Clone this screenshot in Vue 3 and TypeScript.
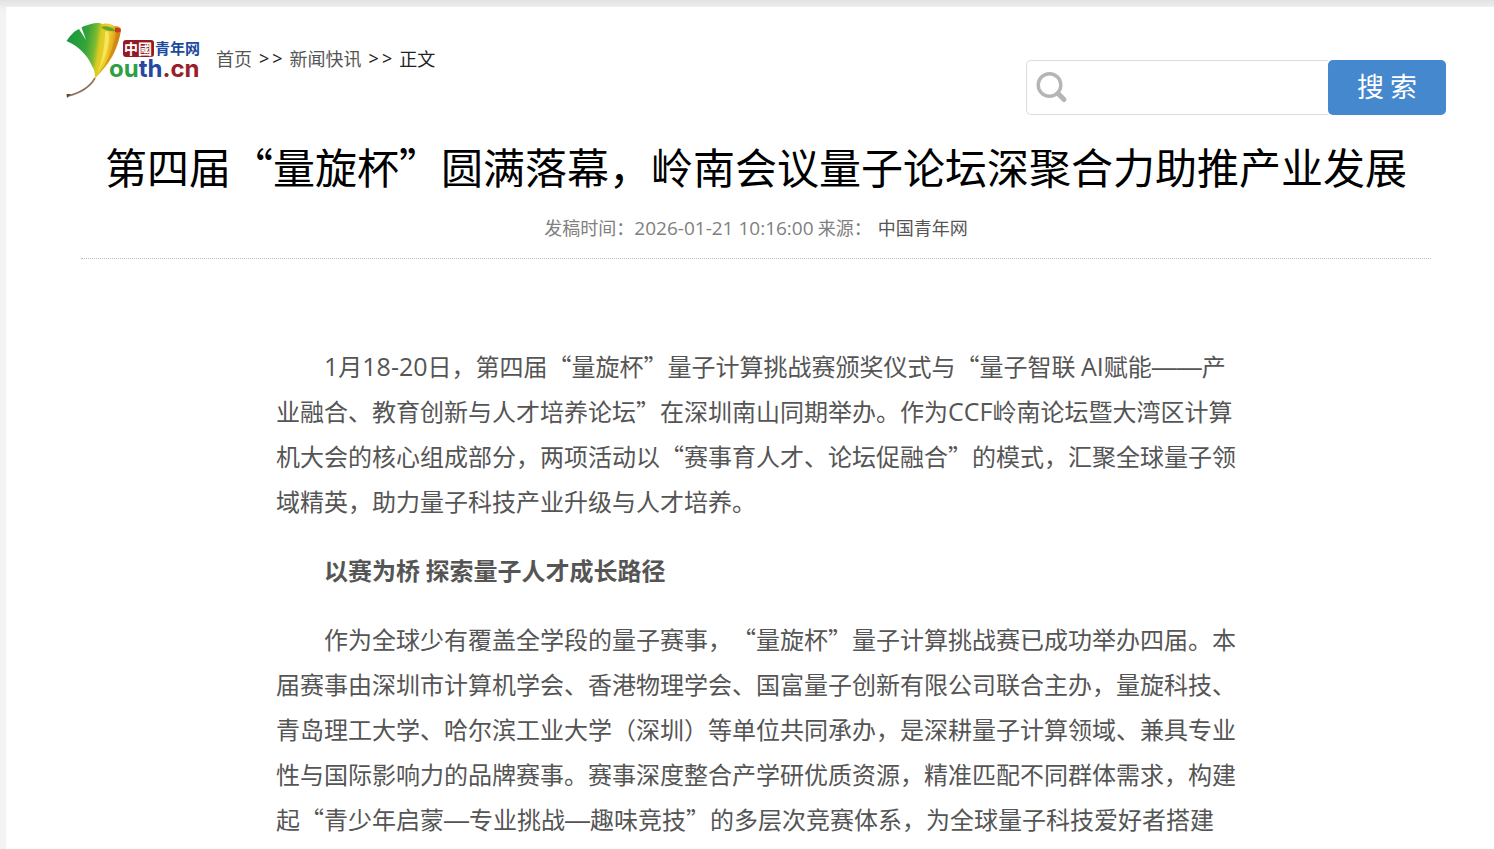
<script setup lang="ts">
import { ref } from 'vue'

interface Run {
  text: string
  kind: 'han' | 'latin' | 'dash'
}

interface Block {
  kind: 'text' | 'heading'
  text: string
}

const query = ref('')

const blocks: Block[] = [
  {
    kind: 'text',
    text: '1月18-20日，第四届“量旋杯”量子计算挑战赛颁奖仪式与“量子智联 AI赋能——产业融合、教育创新与人才培养论坛”在深圳南山同期举办。作为CCF岭南论坛暨大湾区计算机大会的核心组成部分，两项活动以“赛事育人才、论坛促融合”的模式，汇聚全球量子领域精英，助力量子科技产业升级与人才培养。',
  },
  { kind: 'heading', text: '以赛为桥 探索量子人才成长路径' },
  {
    kind: 'text',
    text: '作为全球少有覆盖全学段的量子赛事，“量旋杯”量子计算挑战赛已成功举办四届。本届赛事由深圳市计算机学会、香港物理学会、国富量子创新有限公司联合主办，量旋科技、青岛理工大学、哈尔滨工业大学（深圳）等单位共同承办，是深耕量子计算领域、兼具专业性与国际影响力的品牌赛事。赛事深度整合产学研优质资源，精准匹配不同群体需求，构建起“青少年启蒙—专业挑战—趣味竞技”的多层次竞赛体系，为全球量子科技爱好者搭建',
  },
]

// Latin letters, digits and dashes are set in their own faces beside the Chinese text.
function runs(text: string): Run[] {
  return text
    .split(/([A-Za-z0-9-]+|—+)/)
    .filter((part) => part.length > 0)
    .map((part) => ({
      text: part,
      kind: part.startsWith('—') ? 'dash' : /^[A-Za-z0-9-]+$/.test(part) ? 'latin' : 'han',
    }))
}
</script>

<template>
  <div class="page" lang="zh-CN">
    <div class="sheet">
      <header class="header">
        <div class="brand">
          <a class="logo" href="#" aria-label="中国青年网">
            <svg width="136" height="78" viewBox="0 0 136 78">
              <defs>
                <linearGradient id="leaf" x1="0" y1="0.35" x2="1" y2="0.5">
                  <stop offset="0" stop-color="#149a3d" />
                  <stop offset="0.35" stop-color="#35a33b" />
                  <stop offset="0.52" stop-color="#7fba30" />
                  <stop offset="0.6" stop-color="#dccb22" />
                  <stop offset="0.74" stop-color="#f0d02a" />
                  <stop offset="0.86" stop-color="#e0a01c" />
                  <stop offset="1" stop-color="#c96f15" />
                </linearGradient>
              </defs>
              <path
                d="M0.500 19C4 14 8 9 13 7L20 18L15.500 5.500C18 3.500 22 3 25 2C29 0.500 34 0.500 37 2C42 1 45 2 48 4C52 4 55 5 55 8C54 16 50 28 46 35C41 44 34 51 29 56.500C29 50 28 47 26 44C21 32 12 24 0.500 19Z"
                fill="url(#leaf)"
              />
              <path d="M42 9C45 18 41 34 31 52C36 40 39 24 39 10Z" fill="#faec70" opacity="0.75" />
              <path d="M50 11C48 25 41 42 31 54C43 42 52 25 54 11Z" fill="#c9780f" opacity="0.55" />
              <path d="M35 5C40 3 46 5 50 9C45 10 39 9 35 5Z" fill="#63a52d" />
              <path d="M49 6C52 5 55 6 55 9C53 11 51 11 49 10Z" fill="#c43e1c" />
              <path d="M29 56C24 65 14 71 2 74" fill="none" stroke="#92705a" stroke-width="1.6" />
              <path d="M0.500 72L5 72L1 76Z" fill="#65472f" />
              <rect x="57" y="18" width="31" height="17" rx="3" fill="#951b22" />
              <text class="logo-badge" x="58" y="32">中國</text>
              <text class="logo-name" x="89" y="32">青年网</text>
              <text class="logo-latin" x="43" y="55">
                <tspan fill="#2f9f45">ou</tspan><tspan fill="#2748a0">th</tspan><tspan fill="#98202a">.cn</tspan>
              </text>
            </svg>
          </a>
          <nav class="crumbs" aria-label="面包屑">
            <a href="#">首页</a>
            <span class="sep"><span>&gt;</span><span>&gt;</span></span>
            <a href="#">新闻快讯</a>
            <span class="sep"><span>&gt;</span><span>&gt;</span></span>
            <span>正文</span>
          </nav>
        </div>
        <form class="search" role="search" @submit.prevent>
          <label class="field">
            <svg width="34" height="34" viewBox="0 0 34 34" aria-hidden="true">
              <circle cx="14.500" cy="14" r="11.300" fill="none" stroke="#b5b5b5" stroke-width="3.400" />
              <path d="M23 22.500L29 28.500" stroke="#b5b5b5" stroke-width="5" stroke-linecap="round" />
            </svg>
            <input v-model="query" type="text" aria-label="搜索" />
          </label>
          <button type="submit">搜 索</button>
        </form>
      </header>

      <main class="article">
        <h1>第四届“量旋杯”圆满落幕，岭南会议量子论坛深聚合力助推产业发展</h1>
        <p class="meta">
          <span>发稿时间：<span class="latin">2026-01-21 10:16:00</span> 来源：</span>
          <a href="#">中国青年网</a>
        </p>
        <div class="body">
          <template v-for="(block, i) in blocks" :key="i">
            <p :class="block.kind">
              <template v-for="(run, j) in runs(block.text)" :key="j"
                ><span v-if="run.kind !== 'han'" :class="run.kind">{{ run.text }}</span
                ><template v-else>{{ run.text }}</template></template
              >
            </p>
          </template>
        </div>
      </main>
    </div>
  </div>
</template>

<style>
body {
  margin: 0;
  background: #f3f3f3;
}
</style>

<style scoped>
.page {
  box-sizing: border-box;
  height: 100vh;
  overflow: hidden;
  padding: 7px 0 0 6px;
  background: linear-gradient(#e2e2e2, #f3f3f3 10px);
  font-family: "Noto Sans CJK SC", sans-serif;
  text-spacing-trim: space-all;
  color: #333;
}

.sheet {
  min-height: 100%;
  background: #fff;
}

.header {
  display: flex;
  justify-content: space-between;
  align-items: flex-start;
  height: 132px;
  padding: 0 48px 0 60px;
}

.brand {
  display: flex;
  align-items: flex-start;
  gap: 14px;
  padding-top: 15px;
}

.logo {
  display: block;
}

.logo svg {
  display: block;
}

.logo-badge {
  font-size: 14px;
  font-weight: 700;
  fill: #fff;
}

.logo-name {
  font-size: 15px;
  font-weight: 700;
  fill: #1c4a9c;
}

.logo-latin {
  font-family: Inter, sans-serif;
  font-size: 24px;
  font-weight: 700;
}

.crumbs {
  display: flex;
  align-items: center;
  gap: 7px;
  padding-top: 23px;
  font-size: 18px;
  line-height: 26px;
  color: #222;
}

.crumbs a {
  color: #555;
  text-decoration: none;
}

.sep {
  display: flex;
  gap: 3px;
  font-family: "Noto Sans", sans-serif;
}

.search {
  display: flex;
  width: 420px;
  height: 55px;
  padding-top: 53px;
}

.field {
  box-sizing: border-box;
  display: flex;
  flex: 1;
  align-items: center;
  padding-left: 8px;
  border: 1px solid #dcdcdc;
  border-right: 0;
  border-radius: 5px 0 0 5px;
}

.field input {
  flex: 1;
  min-width: 0;
  height: 40px;
  padding: 0 8px;
  border: 0;
  outline: 0;
  background: transparent;
  font-size: 18px;
}

.search button {
  width: 118px;
  padding: 0 0 4px;
  border: 0;
  border-radius: 5px;
  background: #4588ce;
  color: #fff;
  font-family: inherit;
  font-size: 27px;
}

.article {
  padding: 0 63px 0 75px;
}

h1 {
  margin: 0;
  font-size: 42px;
  font-weight: 400;
  line-height: 54px;
  text-align: center;
  color: #000;
}

.meta {
  display: flex;
  justify-content: center;
  gap: 6px;
  margin: 0;
  padding: 20px 0 17px;
  border-bottom: 1px dotted #bbb;
  font-size: 18px;
  line-height: 28px;
  color: #808080;
}

.meta a {
  color: #555;
  text-decoration: none;
}

.latin {
  font-family: "Open Sans", sans-serif;
  line-height: 1;
}

.dash {
  font-family: "Liberation Sans", sans-serif;
  line-height: 1;
}

.meta .latin {
  font-size: 19px;
}

.body {
  max-width: 960px;
  margin: 0 auto;
  padding: 84px 0 24px;
  font-size: 24px;
  line-height: 45px;
  color: #555;
}

.body p {
  margin: 0 0 24px;
  text-indent: 2em;
}

.body .latin,
.body .dash {
  font-size: 25px;
}

.body .heading {
  font-weight: 700;
}
</style>
